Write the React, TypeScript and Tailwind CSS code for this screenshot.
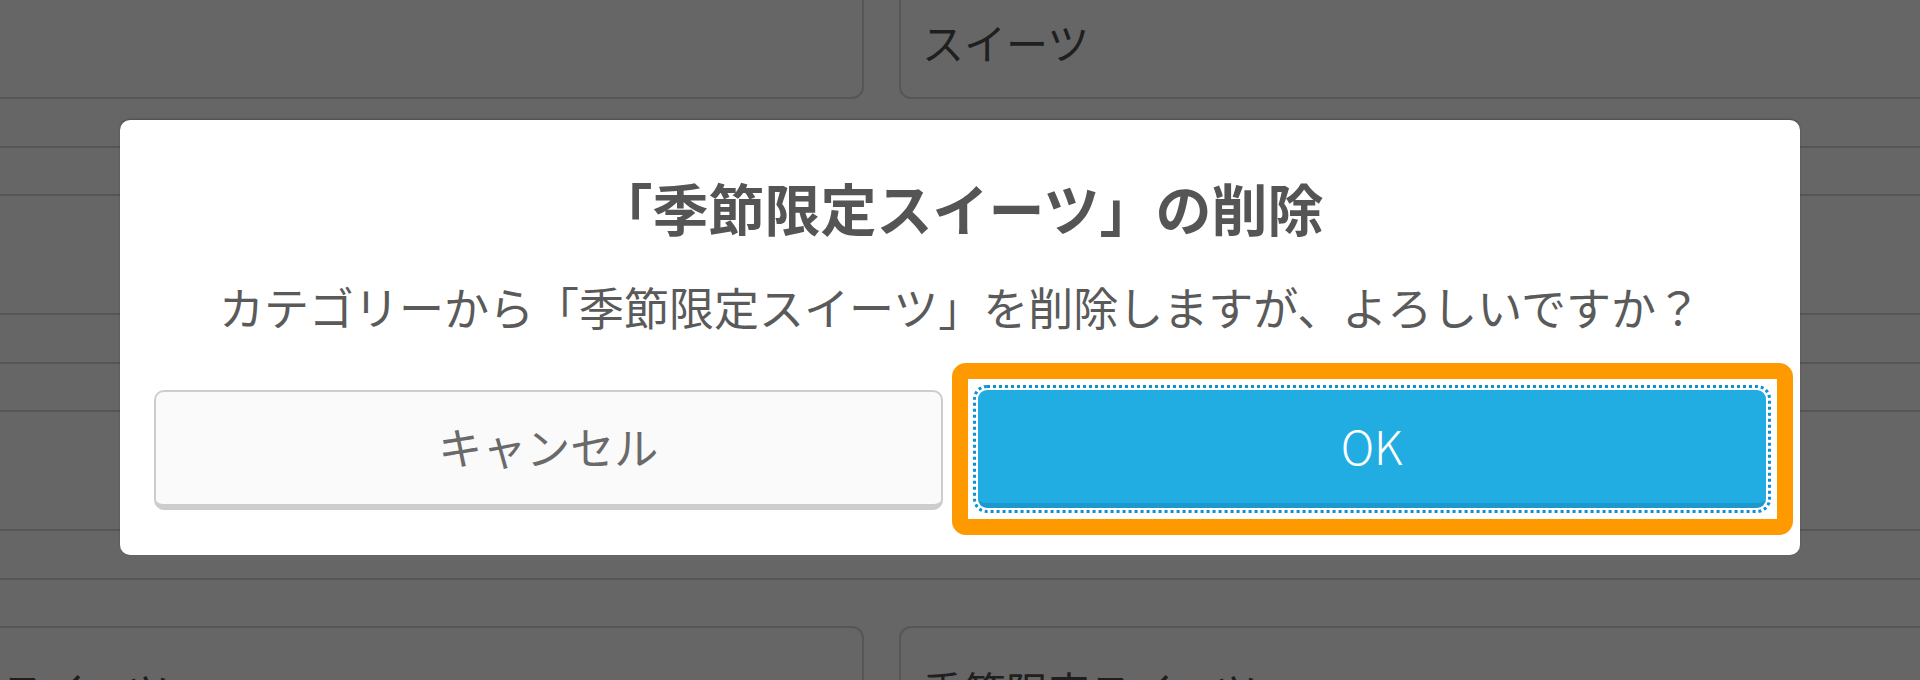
import React from "react";

function Card({ text, wide }: { text?: string; wide?: boolean }) {
  return (
    <div
      className={
        "h-[121px] shrink-0 rounded-[12px] border-2 border-[#565656] flex items-center pl-[21px] pt-[6px] text-[42px] text-[#1f1f1f] " +
        (wide ? "w-[1080px]" : "w-[885px]")
      }
    >
      {text}
    </div>
  );
}

function CardRow({ left, right }: { left?: string; right?: string }) {
  return (
    <div className="flex gap-[35px] ml-[-21px]">
      <Card text={left} />
      <Card text={right} wide />
    </div>
  );
}

function Gap() {
  return (
    <div className="h-[95px] flex items-center">
      <div className="h-[2px] w-full bg-[#565656]" />
    </div>
  );
}

export default function App() {
  return (
    <div className="relative w-[1920px] h-[680px] overflow-hidden bg-[#666666] font-['Noto_Sans_CJK_JP','Noto_Sans',sans-serif]">
      <div className="flex flex-col mt-[-22px]">
        <CardRow right="スイーツ" />
        <Gap />
        <CardRow />
        <Gap />
        <CardRow />
        <Gap />
        <CardRow left="スイーツ" right="季節限定スイーツ" />
      </div>

      <div className="absolute left-[120px] top-[120px] w-[1680px] h-[435px] bg-white rounded-[10px] shadow-[0_-1px_2px_rgba(0,0,0,0.25)] px-[34px] pt-[55px] flex flex-col">
        <div className="h-[64px] leading-[64px] text-[56px] font-bold text-center text-[#555555]">
          「季節限定スイーツ」の削除
        </div>
        <div className="mt-[40px] h-[56px] leading-[56px] text-[45px] text-center text-[#5a5a5a]">
          カテゴリーから「季節限定スイーツ」を削除しますが、よろしいですか？
        </div>
        <div className="mt-[55px] grid grid-cols-2 gap-[35px] h-[120px]">
          <button className="h-[120px] rounded-[10px] bg-[#fafafa] border-2 border-b-[6px] border-[#cdcdcd] text-[44px] text-[#6a6a6a] flex items-center justify-center pb-[4px]">
            キャンセル
          </button>
          <div className="relative">
            <div className="absolute left-[-26px] right-[-27px] top-[-27px] bottom-[-25px] rounded-[14px] border-[16px] border-[#ff9900]" />
            <button className="relative w-full h-[118px] rounded-[9px] bg-[#22ade2] border-b-[5px] border-[#1d98cc] outline-[3px] outline-dotted outline-offset-[2px] outline-[#0f8fd4] text-[46px] font-light text-white flex items-center justify-center pb-[2px]">
              OK
            </button>
          </div>
        </div>
      </div>
    </div>
  );
}
